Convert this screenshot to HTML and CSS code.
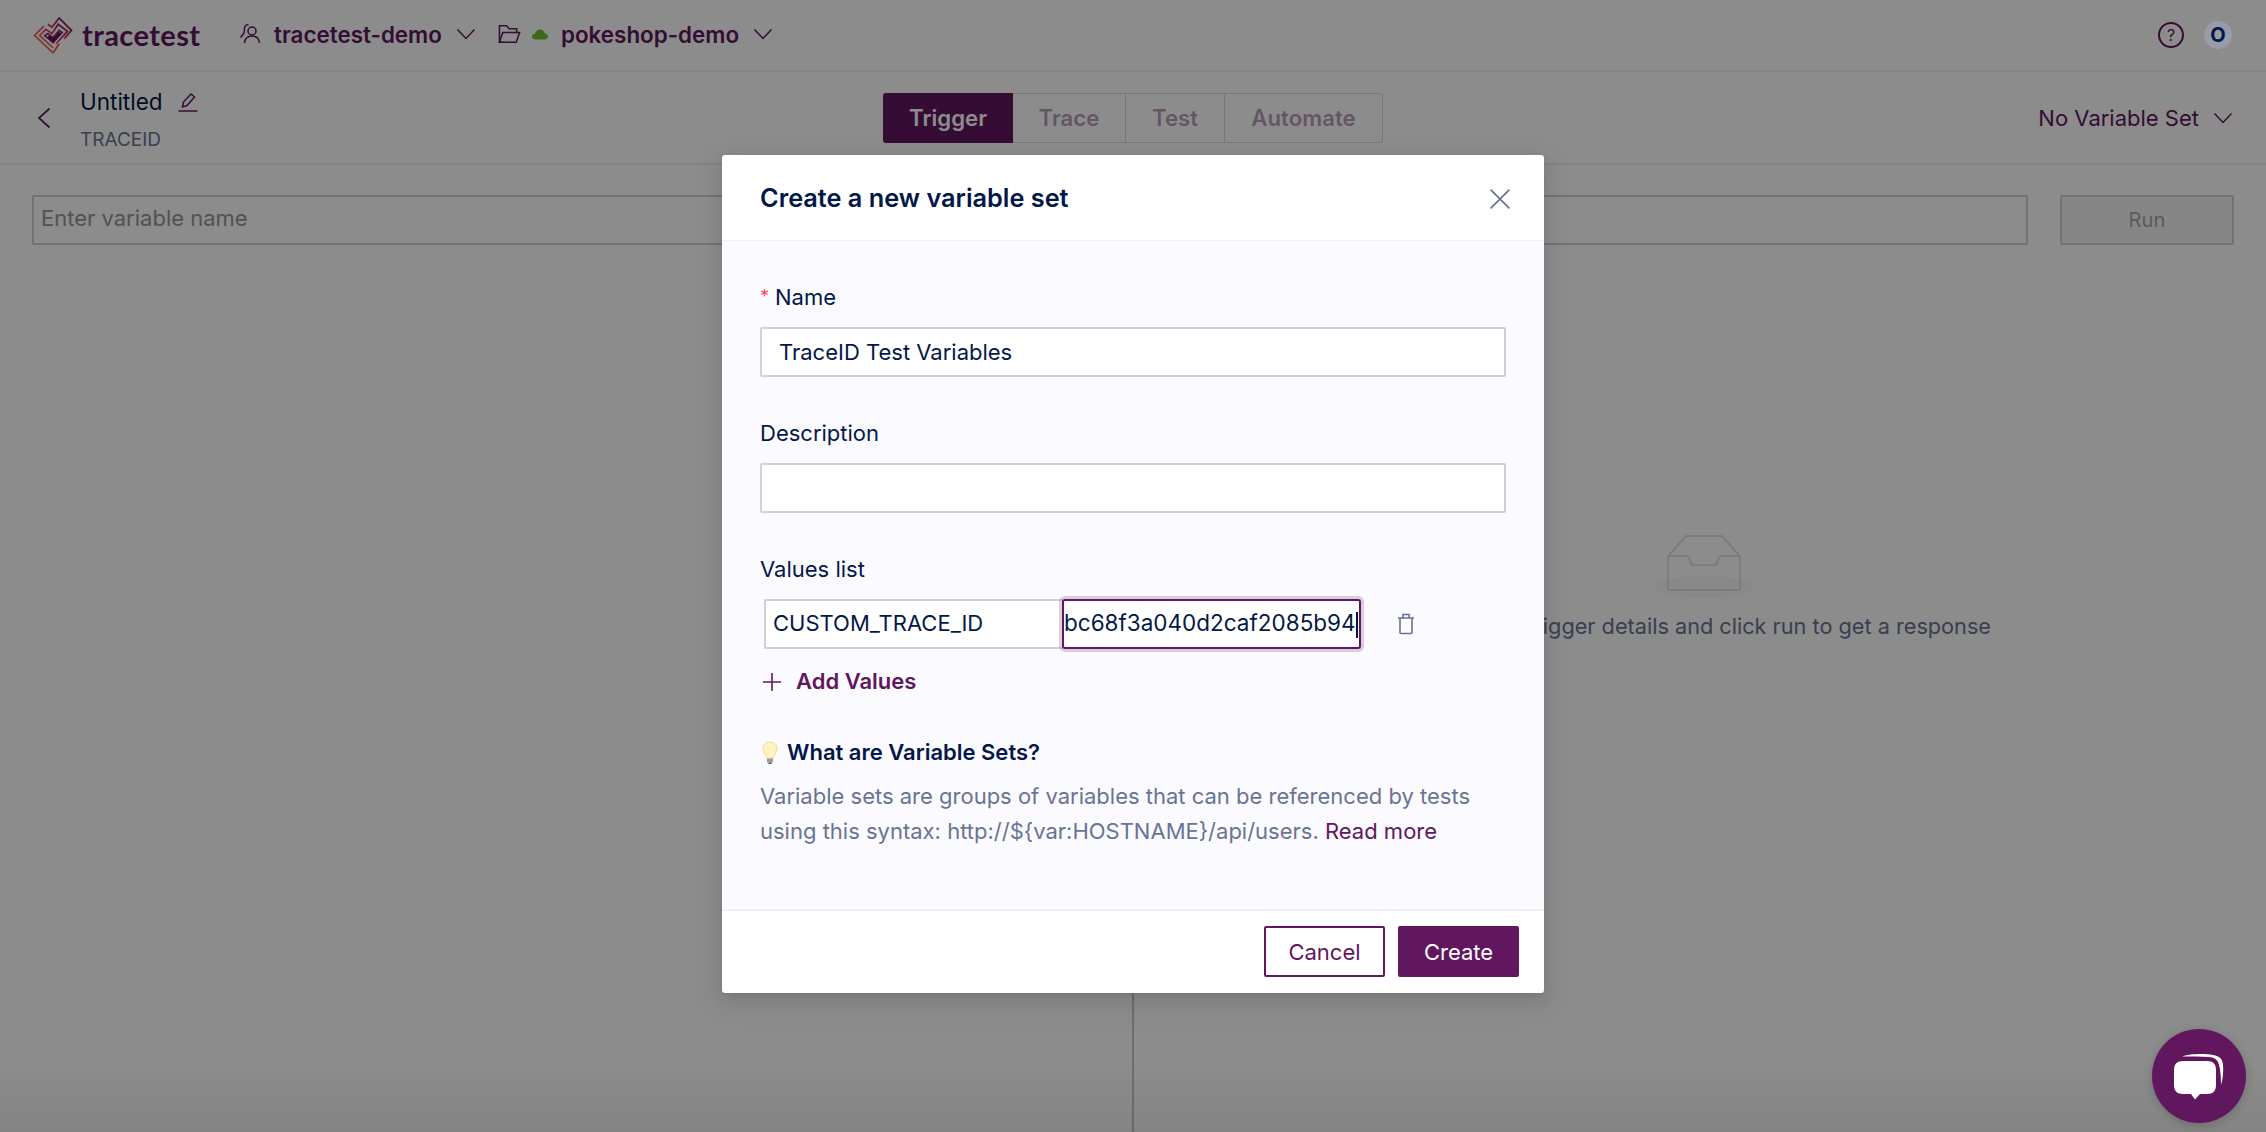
FILE: index.html

```html
<!DOCTYPE html>
<html lang="en">
<head>
    <meta charset="UTF-8">
    <title>Tracetest - Untitled</title>
    <link rel="stylesheet" href="styles.css">
</head>
<body>
    <header class="topbar">
        <div class="brand">
            <svg class="logo" viewBox="1 1 38 36" fill="none" stroke-width="1.7">
                <defs>
                    <linearGradient id="logoGrad" x1="0" y1="1" x2="1" y2="0">
                        <stop offset="0" stop-color="#f5925f"/>
                        <stop offset="0.5" stop-color="#e63a5f"/>
                        <stop offset="1" stop-color="#61175e"/>
                    </linearGradient>
                </defs>
                <path d="M20 36 L2 19 L11 10 M15 8 L19 11 L26 2 L38 14 L31 22 M26 27 L20 36" stroke="url(#logoGrad)"/>
                <path d="M20 31 L7 19 L13 13 L19 17 L25 8 L34 15 L23 27" stroke="url(#logoGrad)"/>
                <path d="M12 19 L15 17 L20 21 L26 14 L29 16 L20 26 Z" stroke="#8a2a70" stroke-width="1.6"/>
                <path d="M15.5 19.5 L20 24 L27 16" stroke="#61175e" stroke-width="3"/>
            </svg>
            <span class="brand-name">tracetest</span>
        </div>
        <div class="crumb crumb-org">
            <svg class="icon-user" viewBox="0 0 22 22" fill="none" stroke="#61175e" stroke-width="1.5">
                <circle cx="13" cy="8" r="4"/>
                <path d="M5.5 20 C6 15.5 9 13 13 13 C17 13 20 15.5 20.5 20"/>
                <path d="M9.5 1.5 C6.5 1.5 5 4 5.5 7 C5.5 10 4 12 1.5 14.5"/>
            </svg>
            <span>tracetest-demo</span>
            <svg class="icon-caret" viewBox="0 0 20 12" fill="none" stroke="#61175e" stroke-width="1.5"><path d="M1.5 1.5 L10 10.5 L18.5 1.5"/></svg>
        </div>
        <div class="crumb crumb-env">
            <svg class="icon-folder" viewBox="0 0 24 20" fill="none" stroke="#61175e" stroke-width="1.6">
                <path d="M5 18.5 H1.5 V1.5 H9 L11.5 4.5 H19.5 V8.5"/>
                <path d="M1.5 18.5 L5 8.5 H22.5 L19 18.5 Z"/>
            </svg>
            <svg class="icon-cloud" viewBox="0 0 16 11"><path d="M4 10.5 C1.5 10.5 0 9.2 0 7.5 C0 5.8 1.5 4.8 3 4.8 C3.6 2 5.6 0.5 8 0.5 C10.5 0.5 12.3 2.2 12.8 4.6 C14.6 4.8 16 5.8 16 7.6 C16 9.3 14.5 10.5 12.5 10.5 Z" fill="#6fbf30"/></svg>
            <span>pokeshop-demo</span>
            <svg class="icon-caret" viewBox="0 0 20 12" fill="none" stroke="#61175e" stroke-width="1.5"><path d="M1.5 1.5 L10 10.5 L18.5 1.5"/></svg>
        </div>
        <div class="topbar-right">
            <div class="help">?</div>
            <div class="avatar">O</div>
        </div>
    </header>

    <section class="testbar">
        <div class="test-info">
            <svg class="icon-back" viewBox="0 0 14 22" fill="none" stroke="#61175e" stroke-width="1.7"><path d="M12.5 1.5 L2 11 L12.5 20.5"/></svg>
            <div class="test-text">
                <div class="test-title">
                    <span>Untitled</span>
                    <svg class="icon-edit" viewBox="0 0 20 20" fill="none" stroke="#61175e" stroke-width="1.5">
                        <path d="M4.5 15 L5.5 10 L13 2 L16.5 5 L9 13.5 Z"/>
                        <path d="M0.5 19 H19.5"/>
                    </svg>
                </div>
                <div class="test-sub">TRACEID</div>
            </div>
        </div>
        <nav class="tabs">
            <div class="tab tab-trigger active">Trigger</div>
            <div class="tab tab-trace">Trace</div>
            <div class="tab tab-test">Test</div>
            <div class="tab tab-automate">Automate</div>
        </nav>
        <div class="var-select">
            <span>No Variable Set</span>
            <svg class="icon-caret" viewBox="0 0 20 12" fill="none" stroke="#61175e" stroke-width="1.5"><path d="M1.5 1.5 L10 10.5 L18.5 1.5"/></svg>
        </div>
    </section>

    <main class="panels">
        <div class="panel-left">
            <div class="fake-input">Enter variable name</div>
        </div>
        <div class="panel-right">
            <div class="run-row">
                <div class="fake-input grow"></div>
                <div class="run-btn">Run</div>
            </div>
            <div class="empty">
                <svg class="icon-empty" viewBox="0 0 100 64" fill="none">
                    <ellipse cx="50" cy="52" rx="49" ry="11" fill="#000" fill-opacity="0.03"/>
                    <path d="M14 21 L32 1 H68 L86 21 V53 Q86 55 84 55 H16 Q14 55 14 53 Z" stroke="#dcdcdc" stroke-width="1.6"/>
                    <path d="M14 21 H32 Q35 21 36 25 Q37 30 40 30 H60 Q63 30 64 25 Q65 21 68 21 H86" stroke="#dcdcdc" stroke-width="1.6"/>
                </svg>
                <p>Add the trigger details and click run to get a response</p>
            </div>
        </div>
    </main>

    <div class="overlay">
        <div class="modal">
            <div class="modal-head">
                <h2>Create a new variable set</h2>
                <svg class="icon-close" viewBox="0 0 20 20" fill="none" stroke="#687492" stroke-width="1.6"><path d="M1.5 1.5 L18.5 18.5 M18.5 1.5 L1.5 18.5"/></svg>
            </div>
            <div class="modal-body">
                <label class="field-label"><span class="req">*</span>Name</label>
                <input class="field" type="text" value="TraceID Test Variables">

                <label class="field-label">Description</label>
                <input class="field" type="text">

                <label class="field-label">Values list</label>
                <div class="value-row">
                    <input class="cell cell-key" type="text" value="CUSTOM_TRACE_ID">
                    <div class="cell-value">bc68f3a040d2caf2085b94<span class="caret"></span></div>
                    <svg class="icon-trash" viewBox="0 0 18 22" fill="none" stroke="#687492" stroke-width="1.6">
                        <path d="M3 5 V19.5 Q3 20.5 4 20.5 H14 Q15 20.5 15 19.5 V5"/>
                        <path d="M1 5 H17 M6 5 V1.5 H12 V5"/>
                    </svg>
                </div>
                <div class="add-values">
                    <svg class="icon-plus" viewBox="0 0 18 18" fill="none" stroke="#61175e" stroke-width="1.6"><path d="M9 0 V18 M0 9 H18"/></svg>
                    <span>Add Values</span>
                </div>
                <div class="tip-title">
                    <svg class="icon-bulb" viewBox="0 0 16 24">
                        <path d="M8 1 C3.6 1 1 4 1 7.6 C1 11 3.6 13 4.6 17 H11.4 C12.4 13 15 11 15 7.6 C15 4 12.4 1 8 1 Z" fill="#fdf3c0" stroke="#f3dc8a" stroke-width="1"/>
                        <rect x="5" y="17.5" width="6" height="4" fill="#9a9a9a"/>
                        <rect x="6.5" y="21.5" width="3" height="1.6" fill="#555"/>
                    </svg>
                    <span>What are Variable Sets?</span>
                </div>
                <p class="tip-text">Variable sets are groups of variables that can be referenced by tests using this syntax: http://${var:HOSTNAME}/api/users. <a href="#">Read more</a></p>
            </div>
            <div class="modal-foot">
                <button class="btn btn-cancel">Cancel</button>
                <button class="btn btn-create">Create</button>
            </div>
        </div>
    </div>

    <div class="chat">
        <svg viewBox="0 0 50 47" class="icon-chat">
            <path d="M8 3.5 C16 0.5 32 0.5 39 2 C46 3.5 48.5 6 49 12 C49.5 19 49 26 47 32 C47 24 46.5 17 45 12 C44 7 41 4.5 35 4 C27 3.5 17 3.5 8 3.5 Z" fill="#fff"/>
            <path d="M9 8 H33 C39 8 42 11 42 17 V32 C42 38 39 41 33 41 H26 L21 46.5 L17 41 H9 C3 41 0 38 0 32 V17 C0 11 3 8 9 8 Z" fill="#fff"/>
        </svg>
    </div>
</body>
</html>
```

FILE: styles.css

```css
* {
    box-sizing: border-box;
}
html, body {
    height: 100%;
}
body {
    margin: 0;
    height: 1132px;
    overflow: hidden;
    font-family: Inter, "Liberation Sans", sans-serif;
    font-size: 22px;
    color: #031849;
    background-color: #fff;
    position: relative;
}

/* top bar */
.topbar {
    height: 72px;
    display: flex;
    align-items: center;
    padding: 0 34px 0 32px;
    border-bottom: 2px solid #f0f0f0;
}
.brand {
    display: flex;
    align-items: center;
    gap: 8px;
    width: 207px;
}
.logo {
    width: 42px;
    height: 37px;
}
.brand-name {
    font-family: Lato, sans-serif;
    font-size: 29px;
    font-weight: 700;
    letter-spacing: 0.4px;
    color: #61175e;
    margin-top: -2px;
}
.crumb {
    display: flex;
    align-items: center;
    font-weight: 600;
    font-size: 22.4px;
    color: #61175e;
    margin-top: -2px;
}
.crumb-org {
    width: 259px;
}
.icon-user {
    width: 22px;
    height: 22px;
    margin-right: 13px;
}
.icon-caret {
    width: 20px;
    height: 12px;
}
.crumb .icon-caret {
    margin-left: 14px;
}
.icon-folder {
    width: 23px;
    height: 20px;
    margin-right: 11px;
}
.icon-cloud {
    width: 16px;
    height: 11px;
    margin-right: 13px;
}
.topbar-right {
    margin-left: auto;
    display: flex;
    align-items: center;
    gap: 20px;
}
.help {
    width: 26px;
    height: 26px;
    border: 2px solid #61175e;
    border-radius: 50%;
    color: #61175e;
    font-size: 16px;
    line-height: 22px;
    text-align: center;
}
.avatar {
    position: relative;
    z-index: 5;
    width: 28px;
    height: 28px;
    border-radius: 50%;
    background-color: #989ca6;
    color: #031849;
    font-weight: 700;
    font-size: 20px;
    line-height: 28px;
    text-align: center;
}

/* test header */
.testbar {
    height: 93px;
    display: grid;
    grid-template-columns: 1fr auto 1fr;
    align-items: center;
    padding: 0 32px;
    border-bottom: 2px solid #f0f0f0;
}
.test-info {
    display: flex;
    align-items: center;
    gap: 29px;
}
.test-text {
    padding-top: 3px;
}
.icon-back {
    width: 14px;
    height: 22px;
    margin-left: 5px;
}
.test-title {
    display: flex;
    align-items: center;
    gap: 15px;
    font-size: 22.5px;
    line-height: 30px;
}
.icon-edit {
    width: 20px;
    height: 20px;
}
.test-sub {
    margin-top: 11px;
    font-size: 19px;
    line-height: 24px;
    color: #687492;
}
.tabs {
    display: flex;
    height: 50px;
    font-weight: 600;
    font-size: 22.2px;
    color: rgba(97,23,94,0.45);
    border: 1px solid #d9d9d9;
    border-left: none;
    border-radius: 3px;
}
.tab {
    display: flex;
    align-items: center;
    justify-content: center;
    border-right: 1px solid #d9d9d9;
}
.tab:last-child {
    border-right: none;
}
.tab-trigger { width: 130px; }
.tab-trace { width: 113px; }
.tab-test { width: 99px; }
.tab-automate { width: 157px; }
.tab.active {
    background-color: #61175e;
    color: #fff;
    margin: -1px 0;
    border-radius: 3px 0 0 3px;
    border-right: none;
}
.var-select {
    display: flex;
    justify-content: flex-end;
    align-items: center;
    gap: 14px;
    color: #61175e;
    font-size: 22px;
    padding-right: 1px;
}

/* panels */
.panels {
    height: 967px;
    display: grid;
    grid-template-columns: 1132px 1fr;
}
.panel-left {
    padding: 30px 32px;
}
.panel-right {
    border-left: 2px solid #c8c8c8;
    padding: 30px 32px 0 0;
}
.fake-input {
    height: 50px;
    border: 2px solid #cdd1db;
    border-radius: 2px;
    padding: 0 7px;
    line-height: 43px;
    font-size: 22px;
    color: #969696;
}
.run-row {
    display: flex;
    gap: 32px;
}
.grow {
    flex: 1;
}
.run-btn {
    width: 174px;
    height: 50px;
    border: 2px solid #cdd1db;
    border-radius: 2px;
    background-color: #f5f5f5;
    color: #a6a6a6;
    font-size: 20.2px;
    line-height: 46px;
    text-align: center;
}
.empty {
    margin-top: 290px;
    text-align: center;
    padding-right: 2px;
}
.icon-empty {
    display: block;
    width: 100px;
    height: 64px;
    margin: 0 auto 0 520px;
}
.empty p {
    margin: 12px 0 0;
    font-size: 21.7px;
    line-height: 30px;
    color: #687492;
    padding-left: 66px;
    white-space: nowrap;
}

/* modal */
.overlay {
    position: absolute;
    top: 0;
    left: 0;
    right: 0;
    bottom: 0;
    z-index: 2;
    display: flex;
    justify-content: center;
    align-items: flex-start;
    padding-top: 155px;
    background: linear-gradient(to top, rgba(0,0,0,0.06), rgba(0,0,0,0) 70px), rgba(0,0,0,0.45);
}
.modal {
    width: 822px;
    height: 838px;
    display: flex;
    flex-direction: column;
    background-color: #fff;
    border-radius: 3px;
    box-shadow: 0 9px 28px 8px rgba(0,0,0,0.05), 0 6px 16px rgba(0,0,0,0.08), 0 3px 6px -4px rgba(0,0,0,0.12);
}
.modal-head {
    height: 86px;
    display: flex;
    align-items: center;
    justify-content: space-between;
    padding: 0 33px 0 38px;
    border-bottom: 1px solid #f0f0f0;
}
.modal-head h2 {
    margin: 0;
    font-size: 25.3px;
    font-weight: 600;
}
.icon-close {
    width: 22px;
    height: 22px;
    margin-top: 2px;
}
.modal-body {
    flex: 1;
    padding: 42px 38px 0;
    background-color: #fbfaff;
}
.field-label {
    display: block;
    font-size: 22px;
    line-height: 29px;
    margin-bottom: 15px;
}
.req {
    color: #ff4d4f;
    margin-right: 6px;
    font-size: 18px;
    line-height: 0;
    vertical-align: 2px;
}
.field {
    display: block;
    width: 100%;
    height: 50px;
    margin-bottom: 42px;
    padding: 0 17px;
    border: 2px solid #ced1db;
    border-radius: 2px;
    background-color: #fff;
    font-family: inherit;
    font-size: 22px;
    color: #031849;
}
.value-row {
    display: flex;
    align-items: center;
    margin-left: 4px;
}
.cell {
    width: 298px;
    height: 50px;
    padding: 0 7px 3px;
    border: 2px solid #ced1db;
    border-right: none;
    border-radius: 2px 0 0 2px;
    background-color: #fff;
    font-family: inherit;
    font-size: 22px;
    color: #031849;
}
.cell-value {
    width: 299px;
    height: 50px;
    padding-left: 0;
    border: 2px solid #61175e;
    border-radius: 3px;
    background-color: #fff;
    box-shadow: 0 0 0 3px rgba(97,23,94,0.2);
    font-size: 22.5px;
    line-height: 44px;
    white-space: nowrap;
    overflow: hidden;
}
.caret {
    display: inline-block;
    width: 2px;
    height: 26px;
    background-color: #031849;
    vertical-align: middle;
}
.icon-trash {
    width: 18px;
    height: 22px;
    margin-left: 36px;
}
.add-values {
    display: flex;
    align-items: center;
    gap: 15px;
    margin: 18px 0 0 3px;
    font-weight: 600;
    font-size: 22px;
    line-height: 29px;
    color: #61175e;
}
.icon-plus {
    width: 18px;
    height: 18px;
}
.tip-title {
    display: flex;
    align-items: center;
    gap: 9px;
    margin-top: 42px;
    font-weight: 600;
    font-size: 22px;
    line-height: 29px;
}
.icon-bulb {
    width: 16px;
    height: 24px;
    margin-left: 2px;
}
.tip-text {
    margin: 12px 0 0;
    font-size: 22px;
    line-height: 35px;
    color: #687492;
}
.tip-text a {
    color: #61175e;
    text-decoration: none;
}
.modal-foot {
    height: 84px;
    display: flex;
    justify-content: flex-end;
    gap: 13px;
    padding: 15px 25px 0 0;
    border-top: 2px solid #f0f0f0;
}
.btn {
    width: 121px;
    height: 51px;
    border: 2px solid #61175e;
    border-radius: 2px;
    font-family: inherit;
    font-size: 22px;
    cursor: pointer;
}
.btn-cancel {
    background-color: #fff;
    color: #61175e;
}
.btn-create {
    background-color: #61175e;
    color: #fff;
}

/* chat bubble */
.chat {
    position: absolute;
    right: 20px;
    bottom: 9px;
    z-index: 5;
    width: 94px;
    height: 94px;
    display: flex;
    align-items: center;
    justify-content: center;
    border-radius: 50%;
    background-color: #61175e;
    box-shadow: 0 2px 10px rgba(0,0,0,0.2);
}
.icon-chat {
    width: 50px;
    height: 47px;
}
```
